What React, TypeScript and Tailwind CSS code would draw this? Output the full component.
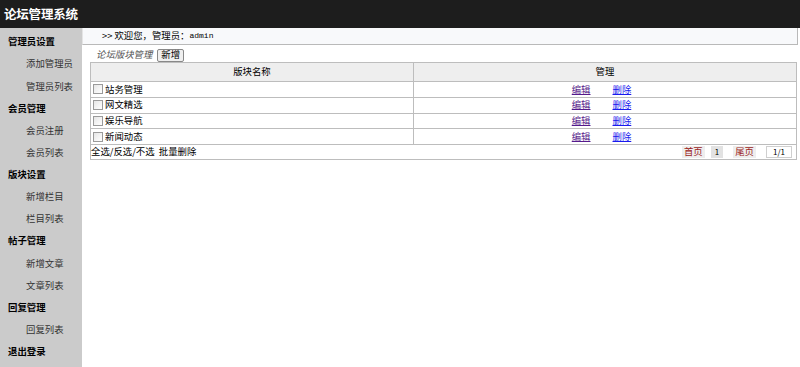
import React from "react";

const font = { fontFamily: '"Noto Sans CJK SC", "Noto Sans", sans-serif' };

const menu: { t: string; h?: boolean }[] = [
  { t: "管理员设置", h: true },
  { t: "添加管理员" },
  { t: "管理员列表" },
  { t: "会员管理", h: true },
  { t: "会员注册" },
  { t: "会员列表" },
  { t: "版块设置", h: true },
  { t: "新增栏目" },
  { t: "栏目列表" },
  { t: "帖子管理", h: true },
  { t: "新增文章" },
  { t: "文章列表" },
  { t: "回复管理", h: true },
  { t: "回复列表" },
  { t: "退出登录", h: true },
];

const rows = ["站务管理", "网文精选", "娱乐导航", "新闻动态"];

export default function App() {
  return (
    <div className="w-[800px] h-[367px] overflow-hidden flex flex-col bg-white text-black" style={font}>
      <div className="h-[28px] shrink-0 bg-[#1d1d1d] flex items-center pl-[4px]">
        <span className="text-white font-bold text-[12.5px] leading-none tracking-[-0.2px]">论坛管理系统</span>
      </div>
      <div className="flex flex-1 min-h-0">
        <div className="w-[82px] shrink-0 bg-[#cbcbcb] pt-[3px] flex flex-col">
          {menu.map((m, i) => (
            <div
              key={i}
              className={
                "h-[22.14px] shrink-0 flex items-center leading-none text-[9.4px] " +
                (m.h ? "pl-[8px] font-bold text-black" : "pl-[26px] text-[#333]")
              }
            >
              {m.t}
            </div>
          ))}
        </div>
        <div className="flex-1 flex flex-col">
          <div className="h-[17px] bg-[#f8f9fb] border-b border-b-[#b9b9b9] border-r border-r-[#b9b9b9] mr-[2px] border-l border-l-[#e4e4e4] flex items-center pl-[19px] text-[9.4px] leading-none">
            <span className="mr-[2px]">&gt;&gt;</span>
            <span>欢迎您，管理员：</span>
            <span className="text-[8px]" style={{ fontFamily: '"Liberation Mono", monospace' }}>admin</span>
          </div>
          <div className="flex items-center h-[14px] pl-[14px] mt-[3px]">
            <span className="italic text-[#555] text-[9.4px] leading-none">论坛版块管理</span>
            <span className="ml-[5px] h-[13px] px-[3px] flex items-center bg-[#efefef] border border-[#888] rounded-[2px] text-[9.4px] leading-none">新增</span>
          </div>
          <div className="ml-[8px] mr-[3px]">
            <table className="w-full border-collapse text-[9.4px] leading-none">
              <thead>
                <tr className="h-[19px] bg-[#eeeeee]">
                  <th className="font-normal border border-[#bdbdbd] w-[323px]">版块名称</th>
                  <th className="font-normal border border-[#bdbdbd]">管理</th>
                </tr>
              </thead>
              <tbody>
                {rows.map((r) => (
                  <tr key={r} className="h-[15.8px]">
                    <td className="border border-[#bdbdbd] pl-[2px]">
                      <div className="flex items-center">
                        <span className="w-[10px] h-[10px] border border-[#9a9a9a] bg-gradient-to-br from-[#e6e6e6] to-white mr-[2px] inline-block" />
                        <span>{r}</span>
                      </div>
                    </td>
                    <td className="border border-[#bdbdbd] text-center pr-[7px]">
                      <span className="text-[#551a8b] underline">编辑</span>
                      <span className="inline-block w-[22px]" />
                      <span className="text-[#1a1aee] underline">删除</span>
                    </td>
                  </tr>
                ))}
                <tr className="h-[15px]">
                  <td colSpan={2} className="border border-[#bdbdbd]">
                    <div className="flex items-center justify-between">
                      <span>全选/反选/不选&nbsp;&nbsp;批量删除</span>
                      <div className="flex items-center gap-[6px] pr-[4px]">
                        <span className="bg-[#eeeeee] px-[2px] h-[12px] flex items-center text-[#9b1c1c]">首页</span>
                        <span className="bg-[#e2e2e2] px-[4px] h-[12px] flex items-center text-[8px]">1</span>
                        <span className="bg-[#eeeeee] px-[2px] ml-[4px] h-[12px] flex items-center text-[#9b1c1c]">尾页</span>
                        <span className="border border-[#cfcfcf] bg-white px-[6px] ml-[4px] h-[12px] flex items-center text-[8px]">1/1</span>
                      </div>
                    </div>
                  </td>
                </tr>
              </tbody>
            </table>
          </div>
        </div>
      </div>
    </div>
  );
}
